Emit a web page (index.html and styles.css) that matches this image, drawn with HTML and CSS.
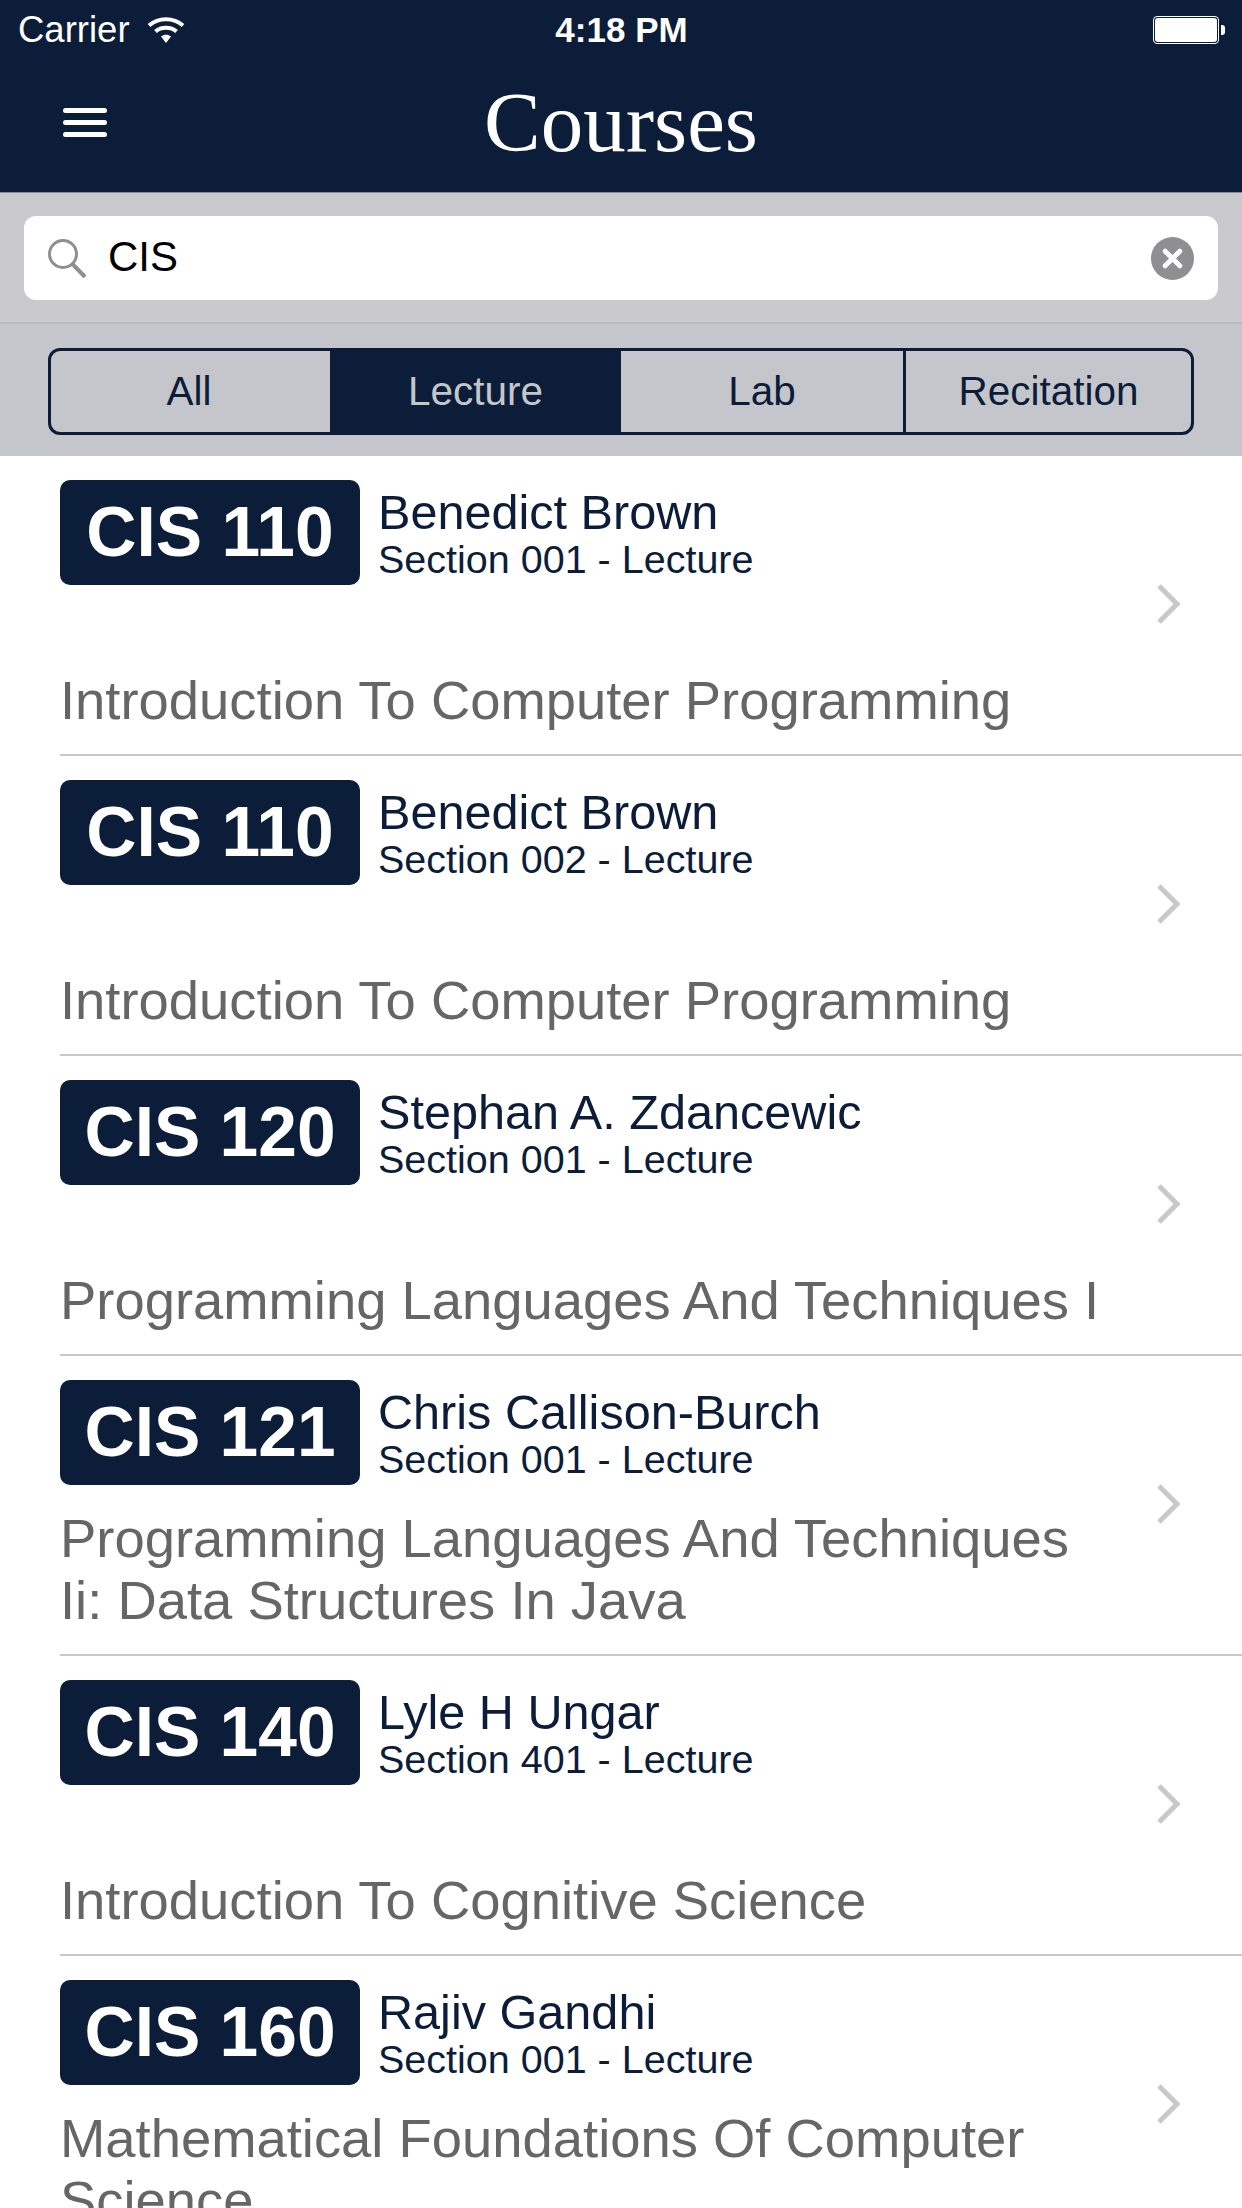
FILE: index.html
```html
<!DOCTYPE html>
<html lang="en">
<head>
<meta charset="UTF-8">
<meta name="viewport" content="width=device-width, initial-scale=1.0">
<title>Courses</title>
<link rel="stylesheet" href="styles.css">
</head>
<body>

<div class="page">
    <header class="top">
        <div class="status">
            <div class="status-left">
                <span>Carrier</span>
                <svg class="wifi" width="38" height="28" viewBox="0 0 38 28">
                    <path d="M2 9.5C11.5 1 26.500 1 36 9.500" fill="none" stroke="#fff" stroke-width="4"/>
                    <path d="M8.500 15.500C14 10.500 24 10.500 29.500 15.500" fill="none" stroke="#fff" stroke-width="4"/>
                    <path d="M14 20.500C17 18 21 18 24 20.500L19 27Z" fill="#fff"/>
                </svg>
            </div>
            <div class="time">4:18 PM</div>
            <div class="status-right">
                <div class="battery"><div class="battery-fill"></div></div>
                <div class="battery-nub"></div>
            </div>
        </div>
        <div class="nav">
            <div class="menu">
                <span></span><span></span><span></span>
            </div>
            <h1>Courses</h1>
        </div>
    </header>

    <div class="search-band">
        <div class="search">
            <svg class="search-icon" width="40" height="40" viewBox="0 0 40 40">
                <circle cx="16" cy="16" r="13.500" fill="none" stroke="#8e8e93" stroke-width="3"/>
                <path d="M25.500 26L38 39" fill="none" stroke="#8e8e93" stroke-width="4"/>
            </svg>
            <span class="search-text">CIS</span>
            <svg class="clear" width="43" height="43" viewBox="0 0 44 44">
                <circle cx="22" cy="22" r="22" fill="#8e8e93"/>
                <path d="M14.500 14.500L29.500 29.500M29.500 14.500L14.500 29.500" stroke="#fff" stroke-width="5" stroke-linecap="round"/>
            </svg>
        </div>
    </div>

    <div class="filter-band">
        <div class="segments">
            <div class="seg seg-all">All</div>
            <div class="seg seg-lecture active">Lecture</div>
            <div class="seg seg-lab">Lab</div>
            <div class="seg seg-recitation">Recitation</div>
        </div>
    </div>

    <div class="list">
        <div class="row">
            <div class="row-main">
                <div class="row-head">
                    <div class="badge">CIS 110</div>
                    <div class="info">
                        <div class="teacher">Benedict Brown</div>
                        <div class="section">Section 001 - Lecture</div>
                    </div>
                </div>
                <div class="course">Introduction To Computer Programming</div>
            </div>
            <svg class="chevron" width="26" height="40" viewBox="0 0 26 40"><path d="M3 2L21 20L3 38" fill="none" stroke="#c8c7cc" stroke-width="5"/></svg>
        </div>
        <div class="row">
            <div class="row-main">
                <div class="row-head">
                    <div class="badge">CIS 110</div>
                    <div class="info">
                        <div class="teacher">Benedict Brown</div>
                        <div class="section">Section 002 - Lecture</div>
                    </div>
                </div>
                <div class="course">Introduction To Computer Programming</div>
            </div>
            <svg class="chevron" width="26" height="40" viewBox="0 0 26 40"><path d="M3 2L21 20L3 38" fill="none" stroke="#c8c7cc" stroke-width="5"/></svg>
        </div>
        <div class="row">
            <div class="row-main">
                <div class="row-head">
                    <div class="badge">CIS 120</div>
                    <div class="info">
                        <div class="teacher">Stephan A. Zdancewic</div>
                        <div class="section">Section 001 - Lecture</div>
                    </div>
                </div>
                <div class="course">Programming Languages And Techniques I</div>
            </div>
            <svg class="chevron" width="26" height="40" viewBox="0 0 26 40"><path d="M3 2L21 20L3 38" fill="none" stroke="#c8c7cc" stroke-width="5"/></svg>
        </div>
        <div class="row">
            <div class="row-main">
                <div class="row-head">
                    <div class="badge">CIS 121</div>
                    <div class="info">
                        <div class="teacher">Chris Callison-Burch</div>
                        <div class="section">Section 001 - Lecture</div>
                    </div>
                </div>
                <div class="course">Programming Languages And Techniques Ii: Data Structures In Java</div>
            </div>
            <svg class="chevron" width="26" height="40" viewBox="0 0 26 40"><path d="M3 2L21 20L3 38" fill="none" stroke="#c8c7cc" stroke-width="5"/></svg>
        </div>
        <div class="row">
            <div class="row-main">
                <div class="row-head">
                    <div class="badge">CIS 140</div>
                    <div class="info">
                        <div class="teacher">Lyle H Ungar</div>
                        <div class="section">Section 401 - Lecture</div>
                    </div>
                </div>
                <div class="course">Introduction To Cognitive Science</div>
            </div>
            <svg class="chevron" width="26" height="40" viewBox="0 0 26 40"><path d="M3 2L21 20L3 38" fill="none" stroke="#c8c7cc" stroke-width="5"/></svg>
        </div>
        <div class="row">
            <div class="row-main">
                <div class="row-head">
                    <div class="badge">CIS 160</div>
                    <div class="info">
                        <div class="teacher">Rajiv Gandhi</div>
                        <div class="section">Section 001 - Lecture</div>
                    </div>
                </div>
                <div class="course">Mathematical Foundations Of Computer Science</div>
            </div>
            <svg class="chevron" width="26" height="40" viewBox="0 0 26 40"><path d="M3 2L21 20L3 38" fill="none" stroke="#c8c7cc" stroke-width="5"/></svg>
        </div>
    </div>
</div>

</body>
</html>
```

FILE: styles.css
```css
body {
    margin: 0;
    padding: 0;
    background-color: #fff;
    font-family: "Liberation Sans", Arial, sans-serif;
}

.page {
    height: 2208px;
    overflow: hidden;
}

.top {
    height: 192px;
    background-color: #0c1d39;
    border-bottom: 1px solid #8a8b90;
    color: #fff;
}

.status {
    display: grid;
    grid-template-columns: 1fr auto 1fr;
    align-items: center;
    height: 60px;
    padding: 0 17px 0 18px;
    font-size: 36.5px;
}

.status-left {
    display: flex;
    align-items: center;
    gap: 17px;
}

.time {
    font-weight: bold;
    font-size: 35px;
}

.status-right {
    display: flex;
    align-items: center;
    justify-content: flex-end;
}

.battery {
    width: 62px;
    height: 24px;
    padding: 1px;
    border: 1px solid #fff;
    border-radius: 4px;
}

.battery-fill {
    height: 100%;
    background-color: #fff;
    border-radius: 3px;
}

.battery-nub {
    width: 4px;
    height: 10px;
    margin-left: 2px;
    background-color: #fff;
    border-radius: 0 3px 3px 0;
}

.nav {
    display: grid;
    grid-template-columns: 1fr auto 1fr;
    align-items: center;
    height: 124px;
    padding-left: 63px;
    padding-right: 63px;
}

.menu {
    display: flex;
    flex-direction: column;
    gap: 7px;
    width: 44px;
}

.menu span {
    height: 5px;
    background-color: #fff;
    border-radius: 3px;
}

h1 {
    margin: 0;
    font-family: "Liberation Serif", "Times New Roman", serif;
    font-size: 85px;
    font-weight: normal;
    line-height: 118px;
}

.search-band {
    height: 131px;
    padding: 23px 24px 0;
    box-sizing: border-box;
    background-color: #c9c9ce;
    border-bottom: 2px solid #bcbcc1;
}

.search {
    display: flex;
    align-items: center;
    height: 84px;
    padding: 0 24px 0 23px;
    background-color: #fff;
    border-radius: 12px;
}

.search-icon {
    margin-right: 21px;
}

.search-text {
    flex: 1;
    margin-bottom: 2px;
    font-size: 42px;
    color: #000;
}

.filter-band {
    height: 132px;
    padding: 24px 48px 0;
    box-sizing: border-box;
    background-color: #c5c6cb;
}

.segments {
    display: flex;
    height: 87px;
    box-sizing: border-box;
    border: 3px solid #0c1d39;
    border-radius: 12px;
    overflow: hidden;
    color: #0c1d39;
    font-size: 40.5px;
}

.seg {
    display: flex;
    align-items: center;
    justify-content: center;
}

.seg-all {
    width: 279px;
    padding-right: 3px;
    box-sizing: border-box;
}

.seg-lecture {
    width: 291px;
}

.seg-lab {
    width: 282px;
    border-right: 3px solid #0c1d39;
}

.seg-recitation {
    flex: 1;
}

.active {
    background-color: #0c1d39;
    color: #c5c6cb;
}

.row {
    display: flex;
    align-items: center;
    height: 300px;
    box-sizing: border-box;
    margin-left: 60px;
    border-bottom: 2px solid #c8c7cc;
}

.row-main {
    display: flex;
    flex-direction: column;
    justify-content: space-between;
    box-sizing: border-box;
    width: 1056px;
    height: 100%;
    padding: 24px 0 22px;
}

.row-head {
    display: flex;
    align-items: center;
    gap: 18px;
}

.badge {
    width: 300px;
    height: 105px;
    background-color: #0c1d39;
    border-radius: 10px;
    color: #fff;
    font-size: 69.5px;
    font-weight: bold;
    line-height: 105px;
    text-align: center;
}

.info {
    padding-top: 3px;
}

.teacher {
    font-size: 48.6px;
    line-height: 50px;
    color: #0c1d39;
}

.section {
    font-size: 39.5px;
    line-height: 44px;
    color: #0c1d39;
}

.course {
    font-size: 54.4px;
    line-height: 62px;
    color: #666;
}

.chevron {
    margin-left: 40px;
    margin-bottom: 2px;
}
```
